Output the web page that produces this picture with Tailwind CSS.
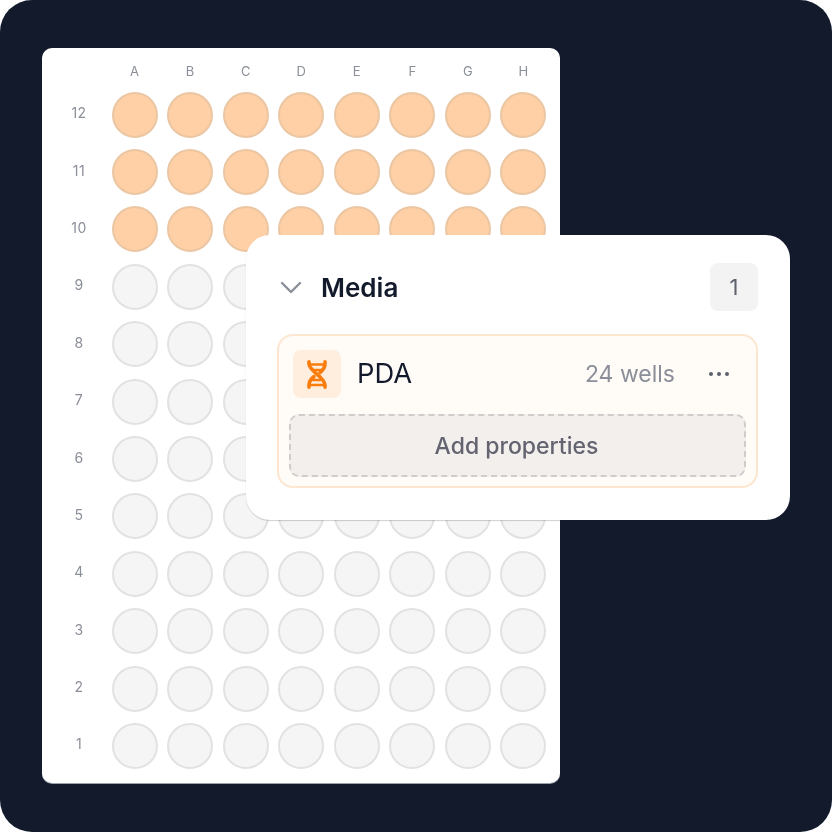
<!DOCTYPE html>
<html lang="en">
<head>
    <meta charset="UTF-8">
    <title>Media plate</title>
    <script src="https://cdn.jsdelivr.net/npm/@tailwindcss/browser@4"></script>
</head>
<body class="bg-white font-['Inter',sans-serif]">
<div class="relative w-[832px] h-[832px] rounded-[32px] bg-[#131a2c] pt-[48px] pl-[42px] overflow-hidden will-change-transform">

    <!-- plate -->
    <div id="plate" class="w-[518px] h-[735px] bg-white rounded-[10px] shadow-[0_1px_0_#9ca3af] pl-[14px] pt-[14px] grid grid-cols-[repeat(9,46px)] grid-rows-[18.3px_repeat(12,46px)] gap-x-[9.55px] gap-y-[11.4px] content-start"></div>

    <!-- media card -->
    <div class="absolute left-[246px] top-[235px] w-[544px] h-[285px] bg-white rounded-[24px] shadow-[0_1px_1px_rgba(20,27,45,0.2)] px-[32px] pt-[28px]">
        <div class="flex items-center h-[48px]">
            <svg class="w-[24px] h-[24px] text-[#8b8f99] ml-[1px]" viewBox="0 0 24 24" fill="none" stroke="currentColor" stroke-width="2.400" stroke-linecap="round" stroke-linejoin="round"><path d="M3 8l9 9 9-9"/></svg>
            <span class="ml-[18px] pt-[1px] text-[26px] font-semibold text-[#131a2c]">Media</span>
            <span class="ml-auto w-[48px] h-[48px] rounded-[8px] bg-[#f3f3f4] flex items-center justify-center text-[22px] text-[#5e606c]">1</span>
        </div>
        <div class="mt-[23px] -ml-px h-[154px] rounded-[16px] border-2 border-[#fde6cf] bg-[#fffbf7] px-[10px] pt-[13px]">
            <div class="flex items-center h-[50px]">
                <div class="ml-[4px] w-[48px] h-[48px] rounded-[8px] bg-[#ffeede] flex items-center justify-center">
                    <svg class="w-[20px] h-[29px] text-[#f97d0d]" viewBox="0 0 20 29" fill="none" stroke="currentColor" stroke-width="3.600" stroke-linecap="round" stroke-linejoin="round">
                        <path d="M2 1.800V4C2 11 18 17 18 25V27.200"/>
                        <path d="M18 1.800V4C18 8 15.500 10.500 13 12.500"/>
                        <path d="M7 16.500C4.500 18.500 2 21 2 25V27.200"/>
                        <path stroke-width="2.400" d="M3 4.500H17M7 10H14M6 20H13M3 25H17"/>
                    </svg>
                </div>
                <span class="ml-[16px] pt-[1px] text-[27.300px] text-[#131a2c]">PDA</span>
                <span class="ml-auto pt-[1px] text-[23px] text-[#8b8f99]">24 wells</span>
                <span class="ml-[34px] mr-[17px] flex gap-[4px]">
                    <i class="w-[4px] h-[4px] rounded-full bg-[#5e606c]"></i>
                    <i class="w-[4px] h-[4px] rounded-full bg-[#5e606c]"></i>
                    <i class="w-[4px] h-[4px] rounded-full bg-[#5e606c]"></i>
                </span>
            </div>
            <div class="mt-[15px] h-[63px] rounded-[10px] border-2 border-dashed border-[#cfcdcc] bg-[#f2efed] flex items-center justify-center text-[23px] font-medium text-[#63646f] pr-[2px] pt-[1px]">Add properties</div>
        </div>
    </div>
</div>

<script>
    const plate = document.getElementById('plate');
    const labelClass = 'flex items-center justify-center text-[14px] tracking-[0.5px] text-[#8b8f99] pb-[4px]';
    const columns = ['', 'A', 'B', 'C', 'D', 'E', 'F', 'G', 'H'];
    let html = columns.map(c => `<div class="flex items-center justify-center text-[13px] text-[#8b8f99] pt-[1px]">${c}</div>`).join('');

    for (let row = 12; row >= 1; row--) {
        html += `<div class="${labelClass}">${row}</div>`;
        for (let col = 0; col < 8; col++) {
            const filled = row >= 10;
            html += filled
                ? '<div class="rounded-full border-2 border-[#ebc6a3] bg-[#ffcfa6]"></div>'
                : '<div class="rounded-full border-2 border-[#e2e2e2] bg-[#f5f5f5]"></div>';
        }
    }
    plate.innerHTML = html;
</script>
</body>
</html>
